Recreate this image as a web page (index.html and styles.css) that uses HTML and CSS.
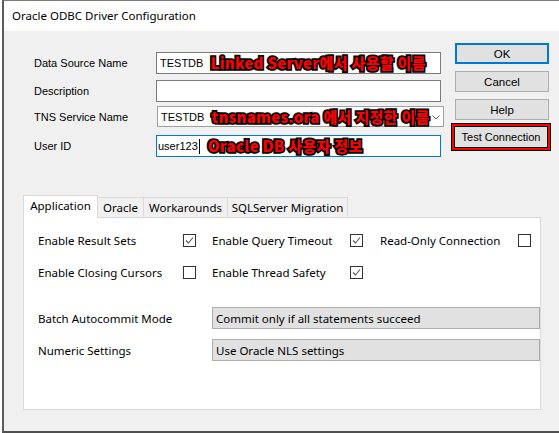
FILE: index.html
```html
<!DOCTYPE html>
<html>
<head>
<meta charset="utf-8">
<link rel="stylesheet" href="styles.css">
</head>
<body>
<div class="window">
  <div class="titlebar">Oracle ODBC Driver Configuration</div>
  <div class="body">
    <div class="top">
      <div class="form">
        <div class="row r1">
          <span class="label">Data Source Name</span>
          <div class="field"><span class="val">TESTDB</span><span class="note">Linked Server에서 사용할 이름</span></div>
        </div>
        <div class="row r2">
          <span class="label">Description</span>
          <div class="field"></div>
        </div>
        <div class="row r3">
          <span class="label">TNS Service Name</span>
          <div class="field combo"><span class="val">TESTDB</span><span class="note">tnsnames.ora 에서 지정한 이름</span>
            <svg class="arrow" width="8" height="5" viewBox="0 0 8 5"><polyline points="0.5,0.5 4,4 7.5,0.5" fill="none" stroke="#666" stroke-width="1"/></svg>
          </div>
        </div>
        <div class="row r4">
          <span class="label">User ID</span>
          <div class="field focus"><span class="val">user123</span><span class="caret"></span><span class="note">Oracle DB 사용자 정보</span></div>
        </div>
      </div>
      <div class="buttons">
        <div class="btn default">OK</div>
        <div class="btn">Cancel</div>
        <div class="btn">Help</div>
        <div class="highlight"><div class="btn test">Test Connection</div></div>
      </div>
    </div>

    <div class="tabs">
      <div class="tab active">Application</div>
      <div class="tab w-oracle">Oracle</div>
      <div class="tab w-work">Workarounds</div>
      <div class="tab w-sql">SQLServer Migration</div>
    </div>
    <div class="panel">
      <div class="checks">
        <span class="clabel">Enable Result Sets</span>
        <span class="cb checked"><svg width="11" height="11" viewBox="0 0 11 11"><polyline points="2,5.5 4.5,8 9,2.5" fill="none" stroke="#555" stroke-width="1.1"/></svg></span>
        <span class="clabel">Enable Query Timeout</span>
        <span class="cb checked"><svg width="11" height="11" viewBox="0 0 11 11"><polyline points="2,5.5 4.5,8 9,2.5" fill="none" stroke="#555" stroke-width="1.1"/></svg></span>
        <span class="clabel">Read-Only Connection</span>
        <span class="cb"></span>

        <span class="clabel">Enable Closing Cursors</span>
        <span class="cb"></span>
        <span class="clabel">Enable Thread Safety</span>
        <span class="cb checked"><svg width="11" height="11" viewBox="0 0 11 11"><polyline points="2,5.5 4.5,8 9,2.5" fill="none" stroke="#555" stroke-width="1.1"/></svg></span>
        <span></span>
        <span></span>
      </div>
      <div class="drow first">
        <span class="dlabel">Batch Autocommit Mode</span>
        <div class="select">Commit only if all statements succeed</div>
      </div>
      <div class="drow">
        <span class="dlabel">Numeric Settings</span>
        <div class="select">Use Oracle NLS settings</div>
      </div>
    </div>
  </div>
</div>
</body>
</html>
```

FILE: styles.css
```css
html, body {
  margin: 0;
  padding: 0;
  background: #ffffff;
  overflow: hidden;
}
.window {
  margin-left: 2px;
  width: 557px;
  height: 430px;
  border-left: 2px solid #5c5c5c;
  border-top: 1px solid #7a7a7a;
  border-bottom: 2px solid #4f4f4f;
  display: flex;
  flex-direction: column;
  box-sizing: content-box;
}
.titlebar {
  height: 30px;
  background: #ffffff;
  font-family: "Noto Sans", sans-serif;
  font-size: 11.5px;
  color: #000;
  line-height: 30px;
  padding-left: 8px;
}
.body {
  flex: 1;
  background: #f0f0f0;
}
.top {
  display: flex;
  align-items: flex-start;
  height: 126px;
}
.form {
  width: 411px;
  padding-left: 30px;
  padding-top: 21px;
}
.row {
  display: flex;
  align-items: center;
  font-family: "Liberation Sans", Arial, sans-serif;
  font-size: 11px;
  color: #000;
}
.row.r2 { margin-top: 6px; }
.row.r3 { margin-top: 4px; }
.row.r4 { margin-top: 8px; }
.label {
  width: 122px;
  flex: none;
}
.field {
  width: 285px;
  height: 22px;
  box-sizing: border-box;
  border: 1px solid #7a7a7a;
  background: #fff;
  display: flex;
  align-items: center;
  padding-left: 3px;
  white-space: nowrap;
  position: relative;
}
.field.combo {
  width: 287px;
  height: 21px;
  margin-left: 1px;
  border-color: #a0a0a0;
}
.field.focus {
  border-color: #0078d7;
  padding-left: 1px;
}
.val {
  font-family: "Liberation Sans", Arial, sans-serif;
  font-size: 11px;
}
.caret {
  width: 1px;
  height: 15px;
  background: #000;
  margin-left: 1px;
}
.note {
  margin-left: 7px;
  font-family: "Noto Sans CJK KR", "Noto Sans", sans-serif;
  font-weight: 900;
  font-size: 15px;
  color: #ff0000;
  letter-spacing: 0.3px;
  -webkit-text-stroke: 3.5px #000;
  paint-order: stroke fill;
  text-shadow: 0 0 1.5px #000;
  line-height: 18px;
}
.r4 .note { margin-left: 8px; }
.arrow {
  position: absolute;
  right: 3px;
  top: 8px;
}
.buttons {
  margin-left: 10px;
  padding-top: 12px;
  display: flex;
  flex-direction: column;
  width: 94px;
}
.btn {
  height: 21px;
  box-sizing: border-box;
  border: 1px solid #adadad;
  background: #e1e1e1;
  font-family: "Liberation Sans", Arial, sans-serif;
  font-size: 11.5px;
  color: #000;
  display: flex;
  align-items: center;
  justify-content: center;
  margin-top: 7px;
}
.btn.default {
  margin-top: 0;
  border: 2px solid #0078d7;
}
.highlight {
  margin-top: 3px;
  margin-left: -4px;
  width: 100px;
  height: 28px;
  box-sizing: border-box;
  border: 1px solid #000;
  background: #ff0000;
  padding: 2px;
}
.btn.test {
  margin-top: 0;
  height: 22px;
  border: 1px solid #000;
  font-size: 11px;
}
.tabs {
  margin-top: 38px;
  margin-left: 19px;
  display: flex;
  height: 22px;
  align-items: flex-start;
  font-family: "Noto Sans", sans-serif;
  font-size: 11.5px;
  color: #000;
}
.tab {
  box-sizing: border-box;
  height: 20px;
  margin-top: 2px;
  border: 1px solid #d9d9d9;
  border-bottom: none;
  background: #f0f0f0;
  display: flex;
  align-items: center;
  justify-content: center;
  margin-left: -1px;
  padding-bottom: 1px;
}
.tab.active {
  margin-top: 0;
  margin-left: 0;
  height: 23px;
  width: 75px;
  background: #fff;
  position: relative;
  z-index: 1;
  padding-bottom: 3px;
}
.w-oracle { width: 47px; }
.w-work { width: 85px; }
.w-sql { width: 121px; }
.panel {
  margin-left: 19px;
  width: 518px;
  height: 193px;
  box-sizing: border-box;
  border: 1px solid #d9d9d9;
  background: #fff;
  padding-top: 6px;
  padding-left: 14px;
  font-family: "Noto Sans", sans-serif;
  font-size: 11.5px;
  color: #000;
}
.checks {
  display: grid;
  grid-template-columns: 145px 29px 138px 30px 138px 13px;
  grid-auto-rows: 32px;
  align-items: center;
}
.cb {
  width: 13px;
  height: 13px;
  box-sizing: border-box;
  border: 1px solid #333;
  background: #fff;
  display: flex;
  align-items: center;
  justify-content: center;
}
.drow {
  display: flex;
  align-items: center;
  margin-top: 10px;
}
.drow.first { margin-top: 19px; }
.dlabel {
  width: 174px;
  flex: none;
}
.select {
  width: 328px;
  height: 22px;
  box-sizing: border-box;
  border: 1px solid #adadad;
  background: #e1e1e1;
  padding-left: 3px;
  display: flex;
  align-items: center;
}
```
